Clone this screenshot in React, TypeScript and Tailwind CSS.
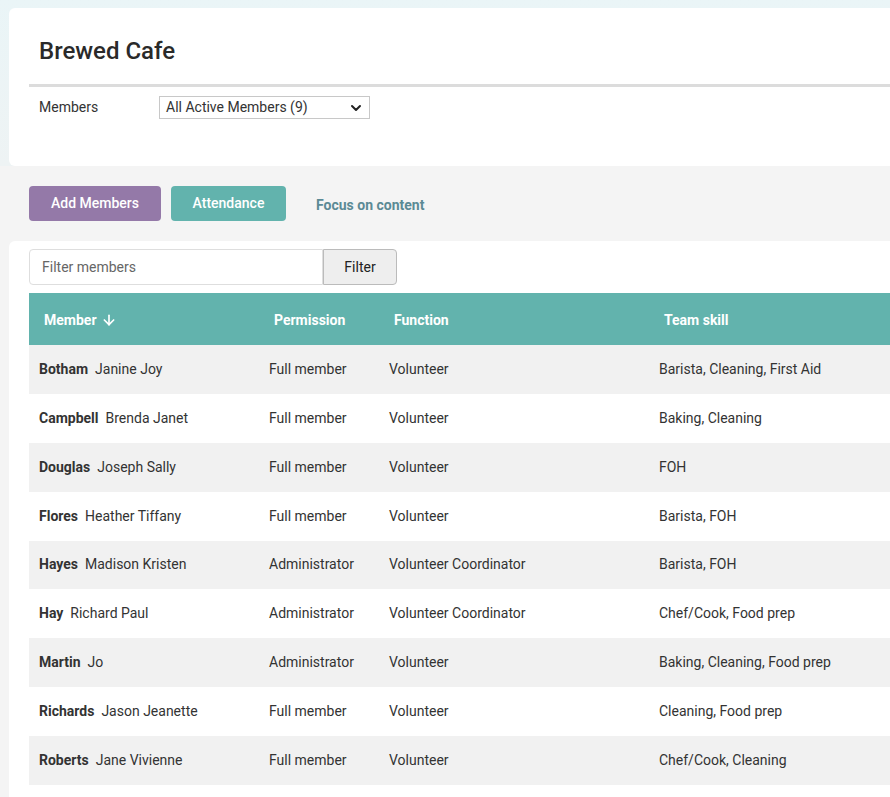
import { ChevronDown, ArrowDown } from 'lucide-react';

const members = [
  { last: 'Botham', first: 'Janine Joy', permission: 'Full member', fn: 'Volunteer', skill: 'Barista, Cleaning, First Aid' },
  { last: 'Campbell', first: 'Brenda Janet', permission: 'Full member', fn: 'Volunteer', skill: 'Baking, Cleaning' },
  { last: 'Douglas', first: 'Joseph Sally', permission: 'Full member', fn: 'Volunteer', skill: 'FOH' },
  { last: 'Flores', first: 'Heather Tiffany', permission: 'Full member', fn: 'Volunteer', skill: 'Barista, FOH' },
  { last: 'Hayes', first: 'Madison Kristen', permission: 'Administrator', fn: 'Volunteer Coordinator', skill: 'Barista, FOH' },
  { last: 'Hay', first: 'Richard Paul', permission: 'Administrator', fn: 'Volunteer Coordinator', skill: 'Chef/Cook, Food prep' },
  { last: 'Martin', first: 'Jo', permission: 'Administrator', fn: 'Volunteer', skill: 'Baking, Cleaning, Food prep' },
  { last: 'Richards', first: 'Jason Jeanette', permission: 'Full member', fn: 'Volunteer', skill: 'Cleaning, Food prep' },
  { last: 'Roberts', first: 'Jane Vivienne', permission: 'Full member', fn: 'Volunteer', skill: 'Chef/Cook, Cleaning' },
];

export default function App() {
  return (
    <div className="min-h-[797px] bg-[#f4f4f4] font-['Roboto',sans-serif] text-[14px] text-[#333]">
      <div className="bg-gradient-to-b from-[#eaf5f7] to-[#eef3f4] pt-2">
        <div className="ml-[9px] rounded-tl-md rounded-bl-md bg-white pb-[47px]">
          <h1 className="px-[30px] pt-[27px] pb-[17px] text-[24px] font-medium leading-[32px] text-[#2a2a2a]">Brewed Cafe</h1>
          <div className="ml-5 h-[3px] bg-[#dcdcdc]" />
          <div className="flex items-center px-[30px] pt-[9px]">
            <label className="w-[120px] text-[#333]">Members</label>
            <div className="flex h-[23px] w-[211px] items-center justify-between border border-[#c8c8c8] pl-[6px] pr-[5px]">
              <span>All Active Members (9)</span>
              <ChevronDown className="h-4 w-4 text-[#222]" strokeWidth={3} />
            </div>
          </div>
        </div>
      </div>

      <div className="flex items-center gap-[10px] px-[29px] pt-5 pb-5">
        <button className="h-[35px] w-[132px] rounded-[4px] bg-[#9479a8] font-medium text-white">Add Members</button>
        <button className="h-[35px] w-[115px] rounded-[4px] bg-[#62b3ad] font-medium text-white">Attendance</button>
        <a className="ml-5 mt-[4px] text-[14px] font-bold text-[#5b8a95]">Focus on content</a>
      </div>

      <div className="ml-[9px] rounded-tl-md bg-white pt-2 pl-5">
        <div className="mb-2 flex h-[36px]">
          <input
            placeholder="Filter members"
            className="w-[294px] rounded-l-[4px] border border-[#dedede] px-3 text-[14px] text-[#333] outline-none placeholder:text-[#666]"
          />
          <button className="w-[74px] rounded-r-[4px] border border-[#bbb] bg-[#eeeeee] text-[#222]">Filter</button>
        </div>
        <table className="w-full border-collapse text-left">
          <thead>
            <tr className="h-[52px] bg-[#62b3ad] text-white">
              <th className="w-[230px] px-[15px] pt-[2px] font-bold">
                <span className="inline-flex items-center gap-1">
                  Member <ArrowDown className="h-4 w-4" strokeWidth={2.5} />
                </span>
              </th>
              <th className="w-[120px] px-[15px] pt-[2px] font-bold">Permission</th>
              <th className="w-[270px] px-[15px] pt-[2px] font-bold">Function</th>
              <th className="px-[15px] pt-[2px] font-bold">Team skill</th>
            </tr>
          </thead>
          <tbody>
            {members.map((m, i) => (
              <tr key={m.last} className={i % 2 === 0 ? 'h-[48.875px] bg-[#f1f1f1]' : 'h-[48.875px] bg-white'}>
                <td className="px-[10px]">
                  <span className="font-bold">{m.last}</span>
                  <span className="ml-[7px]">{m.first}</span>
                </td>
                <td className="px-[10px]">{m.permission}</td>
                <td className="px-[10px]">{m.fn}</td>
                <td className="px-[10px]">{m.skill}</td>
              </tr>
            ))}
          </tbody>
        </table>
        <div className="h-3" />
      </div>
    </div>
  );
}
